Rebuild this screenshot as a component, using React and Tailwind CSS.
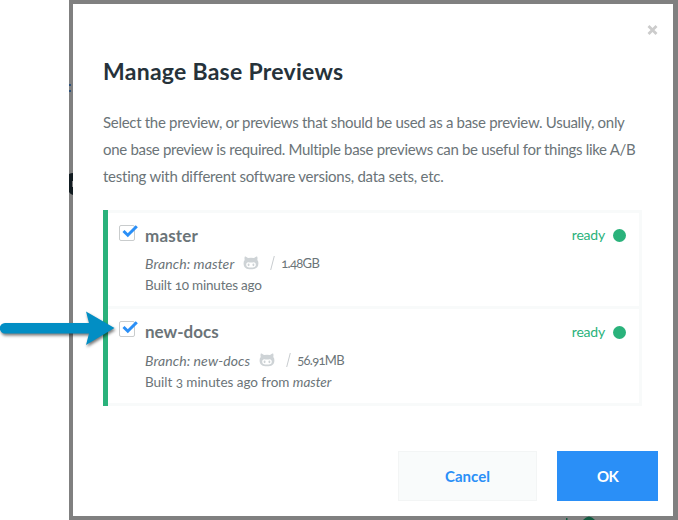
function GithubFace() {
  return (
    <svg viewBox="0 0 16 14" className="h-[14px] w-4 shrink-0" fillRule="evenodd" fill="#ced3d6">
      <path d="M1.7 .8 Q1.8 .3 2.6 .6 L5 1.9 Q8 1.5 11 1.9 L13.4 .6 Q14.2 .3 14.3 .8 Q14.7 2.4 14.3 4 Q15.5 5.2 15.4 7.4 C15.4 11.8 12.4 13.2 8 13.2 C3.6 13.2 .6 11.8 .6 7.4 Q.5 5.2 1.7 4 Q1.3 2.4 1.7 .8 Z M5.2 6.2 C4 6.2 3.2 7.3 3.2 8.7 C3.2 10.9 5 11.6 8 11.6 C11 11.6 12.8 10.9 12.8 8.7 C12.8 7.3 12 6.2 10.8 6.2 Q8 6.6 5.2 6.2 Z" />
      <ellipse cx="5.6" cy="8.8" rx=".95" ry="1.4" />
      <ellipse cx="10.4" cy="8.8" rx=".95" ry="1.4" />
    </svg>
  );
}

function Checkbox() {
  return (
    <span className="relative mt-3 h-4 w-4 shrink-0 rounded-[2px] border border-[#c9cccd] bg-white">
      <svg viewBox="0 0 17 13" className="absolute left-[2px] -top-[1px] h-[13px] w-[17px] max-w-none" fill="none" stroke="#2a8ff7" strokeWidth="3">
        <path d="M1.5 6 L5.8 10.2 L14.8 1.2" />
      </svg>
    </span>
  );
}

function PreviewRow({ name, rowClass, nameClass, branch, size, built, builtClass, statusClass }) {
  return (
    <div className={"flex pl-[11px] whitespace-nowrap " + rowClass}>
      <Checkbox />
      <div className="ml-[10px] flex-1 pt-[10px]">
        <div className={"text-[17px] leading-[26px] font-bold text-[#6b7478] " + nameClass}>{name}</div>
        <div className="flex h-[28px] items-center text-[14px] text-[#6b7478]">
          <span className="tracking-[0.1px] italic">{branch}</span>
          <span className="ml-[9px] flex"><GithubFace /></span>
          <svg viewBox="0 0 5 14" className="ml-[11px] h-[14px] w-[5px]" stroke="#c8cccf" fill="none"><path d="M.7 14 L4.3 0" /></svg>
          <span className="ml-[6px] pt-px text-[13px] tracking-[-0.7px] oldstyle-nums">{size}</span>
        </div>
        <div className={"h-[16px] text-[13.5px] leading-[16px] text-[#6b7478] oldstyle-nums " + builtClass}>{built}</div>
      </div>
      <div className={"mr-[13px] flex h-4 items-center text-[14px] text-[#2ab27b] " + statusClass}>
        <span className="-mt-[2px] tracking-[-0.2px]">ready</span>
        <span className="ml-2 h-[13px] w-[13px] rounded-full bg-[#2ab27b]" />
      </div>
    </div>
  );
}

export default function App() {
  return (
    <div className="relative h-[520px] w-[678px] overflow-hidden bg-white pl-[69px] font-['Lato',sans-serif]">
      <div className="h-[520px] border-4 border-r-[5px] border-[#808080] bg-white pl-[30px]">
        <div className="flex h-[47px] justify-end pt-[21px] pr-[15px]">
          <svg viewBox="0 0 10 10" className="h-[10px] w-[11px]" stroke="#cccccc" strokeWidth="2.8"><path d="M1 1 L9 9 M9 1 L1 9" /></svg>
        </div>
        <h1 className="h-[40px] text-[23px] leading-[40px] font-bold tracking-[0.27px] whitespace-nowrap text-[#26323a]">Manage Base Previews</h1>
        <div className="mt-[18px] text-[15px] leading-[27px] whitespace-nowrap text-[#6b7478]">
          <p className="tracking-[-0.3px]">Select the preview, or previews that should be used as a base preview. Usually, only</p>
          <p className="tracking-[-0.31px]">one base preview is required. Multiple base previews can be useful for things like A/B</p>
          <p className="tracking-[-0.25px]">testing with different software versions, data sets, etc.</p>
        </div>
        <div className="mt-[20px] h-[196px] w-[539px] border-l-[5px] border-[#2ab27b]">
          <div className="h-[196px] border-[3px] border-l-0 border-[#f8fafa]">
            <PreviewRow rowClass="h-[96px] border-b-[3px] border-[#f8fafa]" statusClass="mt-[14px]" name="master" nameClass="h-[26px] tracking-[0.15px]" branch="Branch: master" size="1.48GB" built="Built 10 minutes ago" builtClass="tracking-[-0.2px]" />
            <PreviewRow rowClass="h-[94px]" statusClass="mt-[15px]" name="new-docs" nameClass="h-[27px]" branch="Branch: new-docs" size="56.91MB" built={<>Built 3 minutes ago from <em>master</em></>} builtClass="tracking-[-0.03px]" />
          </div>
        </div>
        <div className="mt-[45px] flex justify-end pr-[15px] text-[15px] font-bold">
          <button className="h-[50px] w-[139px] border border-[#f3f5f5] bg-[#f9fbfb] text-[#2a8ff7]">Cancel</button>
          <button className="ml-5 h-[50px] w-[101px] bg-[#2a8ff7] tracking-[-0.7px] text-white">OK</button>
        </div>
      </div>
      <svg viewBox="0 0 678 520" className="pointer-events-none absolute inset-0 h-[520px] w-[678px]">
        <path d="M69 84h2v2h-2zM69 90h2v2h-2z" fill="#2d517b" />
        <path d="M69 174 Q71 173 73 173 V195 Q71 195 69 192Z" fill="#111b20" />
        <path d="M72 181h1v6h-1z" fill="#808080" />
        <path d="M566 518h1.5v2h-1.5z" fill="#125b40" />
        <path d="M583 520 Q589 513 595 520Z" fill="#125b40" />
        <path d="M5 323 H89 L86 311.5 L114.5 328 L86 345 L89 333.5 H5 A5.2 5.2 0 0 1 5 323Z" fill="#028ec4" style={{ filter: "drop-shadow(1px 2px 1.5px #0008)" }} />
      </svg>
    </div>
  );
}
